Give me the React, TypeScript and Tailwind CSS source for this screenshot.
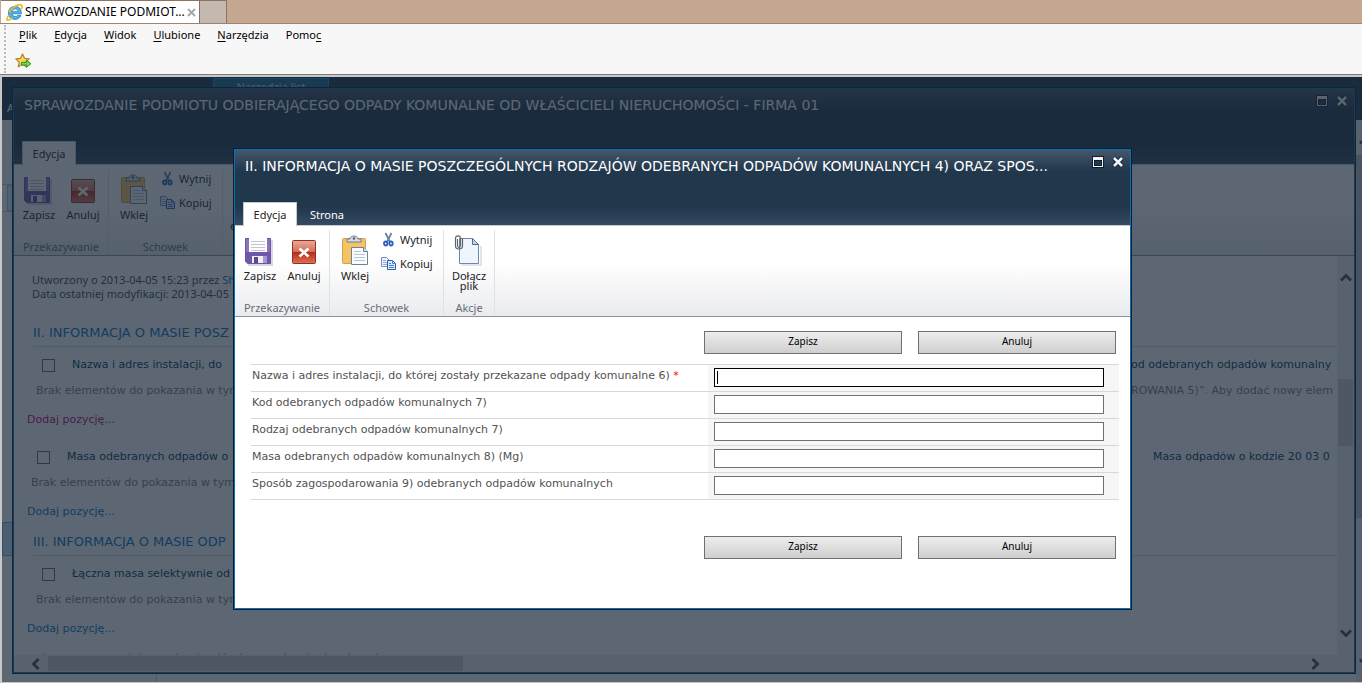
import { ReactNode } from "react";

const UI = "font-['Noto_Sans','Open_Sans',sans-serif]";

const BrowserLogo = () => (
  <svg width="17" height="17" viewBox="0 0 16 16" className="shrink-0">
    <path
      d="M14.400 9.200H5.800c.2 1.800 1.300 2.600 2.900 2.600 1.100 0 1.900-.4 2.400-1.200h3c-.8 2.500-2.900 3.900-5.600 3.900-3.700 0-6.200-2.500-6.200-6.100s2.500-6.200 6.200-6.200c3.800 0 6.100 2.600 5.900 7z"
      fill="#4db2ea"
      stroke="#1f74b8"
      strokeWidth=".7"
    />
    <path d="M5.900 6.900h5.300c-.1-1.400-1.100-2.200-2.600-2.200-1.500 0-2.500.9-2.700 2.200z" fill="#fff" stroke="#1f74b8" strokeWidth=".5" />
    <path
      d="M2.600 10.500C.6 13.700.4 15.500 1.900 15.300c1.200-.1 2.800-1.100 4-2.200M2.800 7.500C6 2.500 12.500-.5 14.500 1c.9.7.7 2.200-.3 3.800"
      fill="none"
      stroke="#f3b61f"
      strokeWidth="1.500"
    />
  </svg>
);

const AddFavourite = () => (
  <svg width="17" height="17" viewBox="0 0 17 17">
    <path
      d="M7.500 1l2 4.300 4.700.6-3.400 3.200.9 4.700-4.200-2.300-4.200 2.300.9-4.700L.8 5.900l4.700-.6z"
      fill="#fdd75c"
      stroke="#b8862b"
      strokeWidth="1.300"
      strokeLinejoin="round"
    />
    <path d="M6.500 9.300h5V7.100l4.500 3.600-4.500 3.600v-2.200h-5z" fill="#6fd64f" stroke="#2a8a2a" strokeWidth=".9" />
  </svg>
);

const SaveIcon = () => (
  <svg width="32" height="32" viewBox="0 0 32 32">
    <path d="M4 30h24V5" fill="none" stroke="#000" strokeOpacity=".15" strokeWidth="2" />
    <path d="M1.500 3.500h25v25h-23l-2-2z" fill="#8b72c0" stroke="#6a55a3" />
    <path d="M2 17h24v11H4l-2-2z" fill="#6f56ab" />
    <path d="M5 3h18v14H5z" fill="#fdfdfd" />
    <path d="M7 6.500h14M7 9.500h14M7 12.500h14M7 15.500h14" stroke="#c4c4cc" />
    <path d="M8 21h15v7H8z" fill="#eeeef5" />
    <path d="M10 22h4v6h-4z" fill="#5b478f" />
    <path d="M19 21h4v7h-4z" fill="#a898d0" />
  </svg>
);

const CancelIcon = () => (
  <svg width="32" height="32" viewBox="0 0 32 32">
    <defs>
      <linearGradient id="cancel" x1="0" y1="0" x2="0" y2="1">
        <stop offset="0" stopColor="#efa794" />
        <stop offset=".48" stopColor="#d4705c" />
        <stop offset=".52" stopColor="#b92c16" />
        <stop offset="1" stopColor="#e0705a" />
      </linearGradient>
    </defs>
    <rect x="4.500" y="5.500" width="23" height="23" rx="1" fill="url(#cancel)" stroke="#8c3325" />
    <path d="M11.500 13.500l9 8M20.500 13.500l-9 8" stroke="#fff" strokeWidth="2.600" />
  </svg>
);

const PasteIcon = () => (
  <svg width="32" height="32" viewBox="0 0 32 32">
    <rect x="3.500" y="3.500" width="23" height="25" rx="1" fill="#f3c365" stroke="#d2a04a" />
    <path d="M8 7V4h3c0-4 8-4 8 0h3v3z" fill="#d9dde3" stroke="#6f7b8a" />
    <circle cx="15" cy="3.500" r="1.300" fill="#57626f" />
    <path d="M12.500 12.500h12l4 4v13h-16z" fill="#f8fbff" stroke="#6e8199" />
    <path d="M24.500 12.500v4h4" fill="#dbe6f3" stroke="#6e8199" />
    <path d="M15 16.500h7M15 19.500h11M15 22.500h11M15 25.500h11" stroke="#b9c6d6" />
  </svg>
);

const CutIcon = () => (
  <svg width="16" height="16" viewBox="0 0 16 16">
    <path d="M4.500 1l4.500 9M10.500 1L6 10" stroke="#6a7e96" strokeWidth="1.700" />
    <ellipse cx="4.700" cy="11.500" rx="1.700" ry="2" fill="none" stroke="#2a5fc0" strokeWidth="1.800" />
    <ellipse cx="10" cy="11.500" rx="1.700" ry="2" fill="none" stroke="#2a5fc0" strokeWidth="1.800" />
  </svg>
);

const CopyIcon = () => (
  <svg width="16" height="16" viewBox="0 0 16 16">
    <path d="M.5 1.500h5l3 3v6h-8z" fill="#edf4ff" stroke="#6f90c4" />
    <path d="M2 4.500h3M2 6.500h4M2 8.500h4" stroke="#8aaddd" />
    <path d="M6.500 4.500h5l3 3v6h-8z" fill="#dceaff" stroke="#2f5ea8" />
    <path d="M11.500 4.500v3h3M8 7.500h2M8 9.500h5M8 11.500h5" fill="none" stroke="#4a80cc" />
  </svg>
);

const AttachIcon = () => (
  <svg width="32" height="32" viewBox="0 0 32 32">
    <path d="M8 30h20V11" fill="none" stroke="#000" strokeOpacity=".1" strokeWidth="2" />
    <path d="M6.500 3.500h13l6 6v19h-19z" fill="#eff5fd" stroke="#6c89ad" />
    <path d="M19.500 3.500v6h6z" fill="#c6d7ec" stroke="#4f6d92" />
    <path
      d="M4.500 4v6.500c0 2.500 3 2.500 3 0v-7c0-3.500-5-3.500-5 0V11c0 4 7 4 7 0V3"
      fill="none"
      stroke="#5f646c"
      strokeWidth="1.200"
    />
  </svg>
);

const Chevron = ({ turn = "" }: { turn?: string }) => (
  <svg width="12" height="12" viewBox="0 0 12 12" className={turn}>
    <path d="M1 8.500L6 3.500l5 5" fill="none" stroke="#4c4c4c" strokeWidth="2.800" />
  </svg>
);

const LargeButton = ({ icon, label }: { icon: ReactNode; label: string }) => (
  <button className="flex w-11 flex-col items-center gap-1">
    {icon}
    <span className="w-12 text-center leading-[10px]">{label}</span>
  </button>
);

const SmallButton = ({ icon, label }: { icon: ReactNode; label: string }) => (
  <button className="flex h-6 items-center gap-[3px]">
    {icon}
    {label}
  </button>
);

const Group = ({ title, children }: { title: string; children: ReactNode }) => (
  <div className="mt-1 flex flex-col justify-between border-r border-[#dfe1e5] px-[3px] pt-[5px]">
    <div className="flex">{children}</div>
    <div className="h-4 text-center leading-4 text-[#666d78]">{title}</div>
  </div>
);

const Ribbon = ({ children }: { children: ReactNode }) => (
  <div className="flex h-[91px] shrink-0 overflow-hidden border-b border-[#8a919b] bg-linear-to-b from-white from-40% to-[#eaebee] text-[11px] text-[#222]">
    <Group title="Przekazywanie">
      <LargeButton icon={<SaveIcon />} label="Zapisz" />
      <LargeButton icon={<CancelIcon />} label="Anuluj" />
    </Group>
    <Group title="Schowek">
      <LargeButton icon={<PasteIcon />} label="Wklej" />
      <div className="-mt-[7px] flex w-[63px] flex-col pl-1">
        <SmallButton icon={<CutIcon />} label="Wytnij" />
        <SmallButton icon={<CopyIcon />} label="Kopiuj" />
      </div>
    </Group>
    {children}
  </div>
);

const DialogHeader = ({ title, tabs }: { title: string; tabs: string[] }) => (
  <div className="flex h-[76px] shrink-0 flex-col justify-between border-b border-[#c3cad4] bg-[linear-gradient(#44566c,#21374c_28%,#21374c_75%,#364a62)]">
    <div className="flex items-start justify-between">
      <h2 className="h-8 truncate pl-2.5 font-['DejaVu_Sans',sans-serif] text-sm leading-8 text-white">{title}</h2>
      <div className="flex gap-2 p-1.5">
        <button aria-label="Maksymalizuj">
          <svg width="12" height="12" viewBox="0 0 12 12">
            <path d="M0 0h12v12H0z" fill="#101c28" />
            <path d="M1 1h10v10H1zM2 4v6h8V4z" fill="#f2f4f6" fillRule="evenodd" />
            <path d="M3 5h6v4H3z" fill="#21374c" />
          </svg>
        </button>
        <button aria-label="Zamknij">
          <svg width="12" height="12" viewBox="0 0 12 12">
            <path d="M2 2l8 8M10 2l-8 8" stroke="#101c28" strokeWidth="4.500" />
            <path d="M2 2l8 8M10 2l-8 8" stroke="#f2f4f6" strokeWidth="2.600" />
          </svg>
        </button>
      </div>
    </div>
    <div className="-mb-px flex pl-2 text-[11px]">
      {tabs.map((tab, i) => (
        <button
          key={tab}
          className={
            i === 0
              ? "h-6 w-[54px] border border-b-0 border-[#c3cad4] bg-white pt-px text-[#222]"
              : "h-6 px-[13px] pt-0.5 text-white"
          }
        >
          {tab}
        </button>
      ))}
    </div>
  </div>
);

const frame = "flex min-w-0 flex-1 flex-col overflow-hidden border border-[#0072bc] bg-white outline outline-[#0f1d2b]";

const SectionTitle = ({ children }: { children: ReactNode }) => (
  <h3 className="ml-[19px] h-7 truncate border-b border-[#d3d9e0] text-[13px] leading-7 text-[#0072bc]">{children}</h3>
);

type ListProps = {
  column: string;
  lastColumn?: ReactNode;
  emptyEnd?: ReactNode;
  inset: string;
  emptyInset: string;
  visited?: boolean;
};

const ListBlock = ({ column, lastColumn, emptyEnd, inset, emptyInset, visited }: ListProps) => (
  <div className="whitespace-nowrap">
    <div className={"flex h-[26px] items-center text-[#003759] " + inset}>
      <label className="flex items-center gap-[17px]">
        <input type="checkbox" className="size-[13px] appearance-none border border-[#6a6a6a]" />
        {column}
      </label>
      {lastColumn}
    </div>
    <div className={"flex h-[26px] items-center text-[#7c7c7c] " + emptyInset}>
      <span>Brak elementów do pokazania w tym widoku listy.</span>
      {emptyEnd}
    </div>
    <div className="flex h-8 items-center pl-[13px]">
      <a href="#" className={visited ? "text-[#c0007a]" : "text-[#0072bc]"}>
        Dodaj pozycję...
      </a>
    </div>
  </div>
);

const ReportDialog = () => (
  <div className="absolute inset-0 flex pt-[11px] pr-[7px] pb-[9px] pl-[11px]">
    <div className={frame}>
      <DialogHeader
        title="SPRAWOZDANIE PODMIOTU ODBIERAJĄCEGO ODPADY KOMUNALNE OD WŁAŚCICIELI NIERUCHOMOŚCI - FIRMA 01"
        tabs={["Edycja"]}
      />
      <Ribbon>
        <div className="pt-[53px] pl-[7px]">e</div>
      </Ribbon>
      <div className="flex min-h-0 flex-1">
        <div className="min-w-0 flex-1 overflow-hidden font-['DejaVu_Sans',sans-serif] text-[11px]">
          <div className={"pt-[17px] pl-[18px] leading-[14px] text-[#444] " + UI}>
            <div>
              Utworzony o 2013-04-05 15:23 przez <a href="#" className="text-[#0072bc]">Sha</a>
            </div>
            <div>Data ostatniej modyfikacji: 2013-04-05 15</div>
          </div>
          <div className="h-[18px]" />
          <SectionTitle>II. INFORMACJA O MASIE POSZ</SectionTitle>
          <div className="h-[5px]" />
          <ListBlock
            column="Nazwa i adres instalacji, do"
            lastColumn={<span className="ml-auto w-[206px] overflow-hidden">od odebranych odpadów komunalny</span>}
            emptyEnd={<span className="ml-auto w-[206px] overflow-hidden">ROWANIA 5)”. Aby dodać nowy elem</span>}
            inset="pl-7"
            emptyInset="pl-[22px]"
            visited
          />
          <div className="h-2" />
          <ListBlock
            column="Masa odebranych odpadów o"
            lastColumn={<span className="ml-auto w-[184px] overflow-hidden">Masa odpadów o kodzie 20 03 0</span>}
            inset="pl-[23px]"
            emptyInset="pl-[17px]"
          />
          <SectionTitle>III. INFORMACJA O MASIE ODP</SectionTitle>
          <div className="h-[5px]" />
          <ListBlock column="Łączna masa selektywnie od" inset="pl-7" emptyInset="pl-[22px]" />
          <div className="mt-1.5 pl-7 text-[#0072bc]">Łączna masa odebranych odpadów komunalnych ulegających</div>
        </div>
        <div className="flex w-[17px] flex-col items-center bg-[#efefef] py-4">
          <Chevron />
          <div className="mt-[95px] h-[67px] w-[15px] bg-[#cdcdcd]" />
          <div className="flex-1" />
          <Chevron turn="rotate-180" />
        </div>
      </div>
      <div className="flex h-[17px] shrink-0 items-center bg-[#efefef] pr-[33px] pl-4">
        <Chevron turn="-rotate-90" />
        <div className="ml-1.5 h-[15px] w-[415px] bg-[#cdcdcd]" />
        <div className="flex-1" />
        <Chevron turn="rotate-90" />
      </div>
    </div>
  </div>
);

const fields = [
  "Nazwa i adres instalacji, do której zostały przekazane odpady komunalne 6)",
  "Kod odebranych odpadów komunalnych 7)",
  "Rodzaj odebranych odpadów komunalnych 7)",
  "Masa odebranych odpadów komunalnych 8) (Mg)",
  "Sposób zagospodarowania 9) odebranych odpadów komunalnych",
];

const FormButtons = () => (
  <div className="flex justify-end gap-4 pr-[3px]">
    {["Zapisz", "Anuluj"].map((label) => (
      <button
        key={label}
        className="h-[23px] w-[198px] border border-[#707070] bg-linear-to-b from-[#ededed] to-[#cfcfcf] pb-1 text-[10px] leading-4 text-black"
      >
        {label}
      </button>
    ))}
  </div>
);

const ItemDialog = () => (
  <div className="absolute inset-0 flex pt-[72px] pr-[231px] pb-[73px] pl-[232px]">
    <div className={frame}>
      <DialogHeader
        title="II. INFORMACJA O MASIE POSZCZEGÓLNYCH RODZAJÓW ODEBRANYCH ODPADÓW KOMUNALNYCH 4) ORAZ SPOS..."
        tabs={["Edycja", "Strona"]}
      />
      <Ribbon>
        <Group title="Akcje">
          <LargeButton icon={<AttachIcon />} label="Dołącz plik" />
        </Group>
      </Ribbon>
      <form className="flex-1 pt-3.5 pr-[11px] pl-4" onSubmit={(e) => e.preventDefault()}>
        <FormButtons />
        <div className="mt-2.5 mb-9 border-b border-[#d8d8d8] font-['DejaVu_Sans',sans-serif] text-[11px] text-[#525252]">
          {fields.map((field, i) => (
            <div key={field} className="flex h-[27px] border-t border-[#d8d8d8]">
              <label htmlFor={"field" + i} className="w-[457px] shrink-0 pt-[3px] pl-px leading-4">
                {field}
                {i === 0 && <span className="text-[#ff0000]"> *</span>}
              </label>
              <div className="flex flex-1 items-start bg-[#f6f6f6] pt-[3px] pr-[15px] pl-1.5">
                <div className="relative flex-1">
                  <input
                    id={"field" + i}
                    type="text"
                    className={
                      "block h-[19px] w-full border bg-white px-0.5 caret-transparent outline-none " +
                      (i === 0 ? "border-black" : "border-[#707070]")
                    }
                  />
                  {i === 0 && <span className="absolute top-[3px] left-[3px] h-[13px] w-px bg-black" />}
                </div>
              </div>
            </div>
          ))}
        </div>
        <FormButtons />
      </form>
    </div>
  </div>
);

// the site page that both dialogs are stacked on
const SitePage = () => (
  <div className="flex h-full bg-white text-[11px]">
    <div className="flex flex-1 flex-col">
      <div className="flex h-[43px] bg-[#21374c] text-white">
        <div className="w-[211px] pt-[23px] pl-[5px]">A</div>
        <div className="mt-px h-6 w-[116px] border border-[#0b9bd0] bg-[#1a6b92] text-center text-[#c8dce8]">Narzędzia list</div>
      </div>
      <div className="h-[65px] border-b border-[#c5ccd5] bg-[#f4f5f7]" />
      <div className="ml-[5px] h-[26px] w-40 border border-[#8ac6ea] bg-[#d5ebfa]" />
      <div className="h-[311px] border-t border-[#c5ccd5]" />
      <div className="h-[34px] w-[154px] border border-[#69b3dc] bg-[#c4e3f5]" />
      <div className="w-[155px] flex-1 border-r border-[#d5dae0]" />
    </div>
    <div className="-mr-[11px] flex w-[17px] flex-col items-center bg-[#efefef]">
      <div className="h-[43px] w-full shrink-0 bg-[#21374c]" />
      <div className="flex h-[35px] shrink-0 items-end pb-2">
        <Chevron />
      </div>
      <div className="h-[363px] w-full shrink-0 bg-[#c0c0c0]" />
      <div className="flex-1" />
      <div className="pb-3.5">
        <Chevron turn="rotate-180" />
      </div>
    </div>
  </div>
);

const menu = [
  ["", "P", "lik"],
  ["", "E", "dycja"],
  ["", "W", "idok"],
  ["", "U", "lubione"],
  ["", "N", "arzędzia"],
  ["Pomo", "c", ""],
];

export default function App() {
  return (
    <div className={"flex h-screen flex-col overflow-hidden bg-[#f7f7f7] " + UI}>
      <div className="flex h-6 shrink-0 border-b border-[#9d8371] bg-[#c4a88f] pl-px">
        <div className="flex w-[199px] items-center gap-0.5 border-t border-r border-[#8d7462] bg-white pl-[5px]">
          <BrowserLogo />
          <span className="mr-px w-[159px] shrink-0 whitespace-nowrap text-xs text-black">SPRAWOZDANIE PODMIOT...</span>
          <button aria-label="Zamknij kartę">
            <svg width="9" height="9" viewBox="0 0 9 9">
              <path d="M1 1l7 7M8 1L1 8" stroke="#a8a8a8" strokeWidth="2" />
            </svg>
          </button>
        </div>
        <button aria-label="Nowa karta" className="w-[27px] border-t border-r border-[#8d7462] bg-[#c4b9b0]" />
      </div>
      <div className="flex h-[51px] shrink-0 border-b border-[#7c7c7c] pl-1">
        <div className="my-px border-l-2 border-dotted border-[#bcbcbc]" />
        <div className="flex flex-col gap-2.5 pt-[3px] pl-[9px]">
          <div className="flex gap-[17px] pl-1 text-[11px] leading-4 text-black">
            {menu.map(([before, key, after]) => (
              <button key={key}>
                {before}
                <u className="underline-offset-2">{key}</u>
                {after}
              </button>
            ))}
          </div>
          <button aria-label="Dodaj do ulubionych" className="w-fit">
            <AddFavourite />
          </button>
        </div>
      </div>
      <main className="min-h-0 flex-1 border-t-2 border-b border-l-2 border-[#c8c8c8]">
        <div className="relative h-full overflow-hidden">
          <SitePage />
          <ReportDialog />
          <div className="absolute inset-0 bg-[#182738]/70" />
          <ItemDialog />
        </div>
      </main>
    </div>
  );
}
